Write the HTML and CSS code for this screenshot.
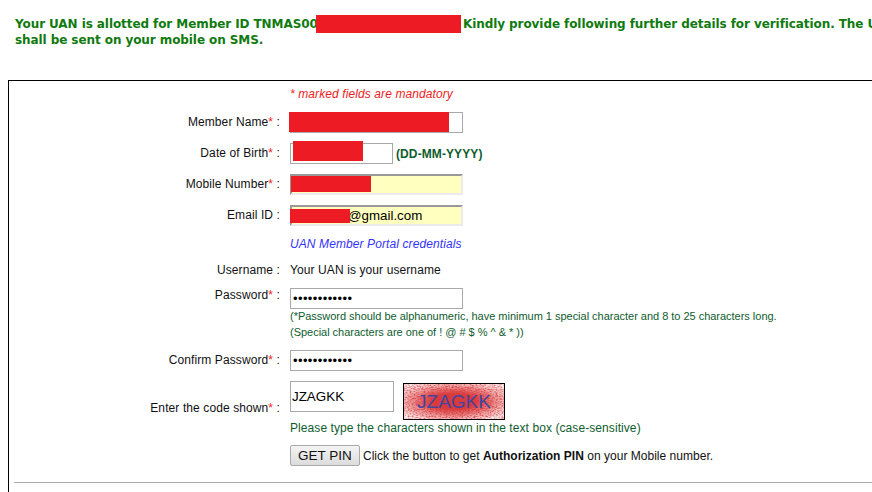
FILE: index.html
```html
<!DOCTYPE html>
<html lang="en">
<head>
    <meta charset="UTF-8">
    <title>UAN Member Registration</title>
    <link rel="stylesheet" href="styles.css">
</head>
<body>
    <div class="message">
        <span class="messageId">Your UAN is allotted for Member ID TNMAS00<span class="redact redactId"></span></span>Kindly provide following further details for verification. The UAN<br>
        shall be sent on your mobile on SMS.
    </div>
    <div class="formBox">
        <div class="row rowNote">
            <div></div>
            <div class="mandatory">* marked fields are mandatory</div>
        </div>
        <div class="row">
            <label>Member Name<span class="star">*</span> :</label>
            <div class="field">
                <input class="input" type="text">
                <span class="redact redactName"></span>
            </div>
        </div>
        <div class="row">
            <label>Date of Birth<span class="star">*</span> :</label>
            <div class="field">
                <input class="input inputDate" type="text">
                <span class="redact redactDate"></span>
                <b class="dateHint">(DD-MM-YYYY)</b>
            </div>
        </div>
        <div class="row">
            <label>Mobile Number<span class="star">*</span> :</label>
            <div class="field">
                <input class="input inputLocked" type="text">
                <span class="redact redactMobile"></span>
            </div>
        </div>
        <div class="row">
            <label>Email ID :</label>
            <div class="field">
                <input class="input inputLocked inputEmail" type="text" value="@gmail.com">
                <span class="redact redactEmail"></span>
            </div>
        </div>
        <div class="row rowPortal">
            <div></div>
            <div class="portal">UAN Member Portal credentials</div>
        </div>
        <div class="row rowUser">
            <label>Username :</label>
            <div>Your UAN is your username</div>
        </div>
        <div class="row rowPassword">
            <label>Password<span class="star">*</span> :</label>
            <div>
                <input class="input inputPass" type="password" value="abcdefgh1234">
                <div class="hint hintFirst">(*Password should be alphanumeric, have minimum 1 special character and 8 to 25 characters long.</div>
                <div class="hint">(Special characters are one of ! @ # $ % ^ &amp; * ))</div>
            </div>
        </div>
        <div class="row">
            <label>Confirm Password<span class="star">*</span> :</label>
            <div class="field">
                <input class="input inputPass" type="password" value="abcdefgh1234">
            </div>
        </div>
        <div class="row rowCode">
            <label>Enter the code shown<span class="star">*</span> :</label>
            <div class="codeBox">
                <input class="input inputCode" type="text" value="JZAGKK">
                <div class="captcha">
                    <svg class="captchaNoise" width="100" height="35">
                        <filter id="scratch">
                            <feTurbulence type="fractalNoise" baseFrequency="0.5 0.9" numOctaves="2" seed="4"/>
                            <feColorMatrix values="0 0 0 0 1  0 0 0 0 1  0 0 0 0 1  2.4 0 0 0 -0.5"/>
                        </filter>
                        <rect width="100" height="35" filter="url(#scratch)"/>
                    </svg>
                    <span class="captchaText">JZAGKK</span>
                </div>
            </div>
        </div>
        <div class="row rowType">
            <div></div>
            <div class="typeHint">Please type the characters shown in the text box (case-sensitive)</div>
        </div>
        <div class="row rowPin">
            <div></div>
            <div class="pinBox">
                <button class="pinButton">GET PIN</button>
                <span>Click the button to get <b>Authorization PIN</b> on your Mobile number.</span>
            </div>
        </div>
        <div class="divider"></div>
    </div>
</body>
</html>
```

FILE: styles.css
```css
html, body {
    margin: 0;
    height: 492px;
    overflow: hidden;
    background-color: white;
}
body {
    font-family: "Liberation Sans", Arial, sans-serif;
    font-size: 12px;
    letter-spacing: 0.1px;
    color: #111;
}
.message {
    width: 1000px;
    height: 80px;
    box-sizing: border-box;
    padding: 16px 0 0 15px;
    font-family: "DejaVu Sans", Verdana, sans-serif;
    font-size: 12px;
    font-weight: bold;
    letter-spacing: -0.08px;
    line-height: 16px;
    color: #0f7a0f;
    white-space: nowrap;
}
.messageId {
    display: inline-block;
    position: relative;
    width: 448px;
}
.formBox {
    width: 1000px;
    margin-left: 8px;
    border: 1px solid black;
    border-bottom: none;
    height: 420px;
}
.row {
    display: grid;
    grid-template-columns: 271px 1fr;
    column-gap: 10px;
    align-items: center;
    height: 31px;
}
.row label {
    text-align: right;
    padding-bottom: 2px;
}
.rowNote {
    height: 26px;
}
.rowPortal {
    height: 25px;
}
.rowUser {
    height: 27px;
}
.rowUser label {
    padding-bottom: 0;
}
.rowPassword {
    height: 62px;
    align-items: start;
    padding-top: 5px;
    box-sizing: border-box;
}
.rowPassword label {
    padding-bottom: 0;
}
.rowCode {
    height: 45px;
}
.rowCode label {
    padding: 19px 0 0;
}
.rowType {
    height: 13px;
}
.rowPin {
    height: 43px;
}
.field {
    position: relative;
    display: flex;
    align-items: center;
}
.star {
    color: #ed1c24;
}
.mandatory {
    font-style: italic;
    color: #ed1c24;
}
.portal {
    font-style: italic;
    color: #3333ff;
}
.input {
    display: block;
    box-sizing: border-box;
    width: 173px;
    height: 21px;
    margin: 0;
    padding: 1px 2px;
    border: 1px solid #a9a9a9;
    border-radius: 0;
    background-color: white;
    font-family: "Liberation Sans", Arial, sans-serif;
    font-size: 13px;
    color: black;
}
.inputDate {
    width: 103px;
}
.inputLocked {
    border-style: solid;
    border-width: 2px;
    border-color: #999 #ebebeb #ebebeb #999;
    background-color: #ffffc0;
    padding: 1px 0;
}
.inputEmail {
    padding-left: 56px;
    font-size: 13.33px;
}
.inputPass {
    letter-spacing: 0.4px;
}
.inputCode {
    width: 104px;
    height: 31px;
    padding: 0 1px;
    font-size: 13.4px;
}
.dateHint {
    margin-left: 3px;
    color: #0f5c2e;
}
.redact {
    position: absolute;
    background-color: #ed1c24;
}
.redactId {
    left: 301px;
    top: -1px;
    width: 145px;
    height: 18px;
}
.redactName {
    left: -1px;
    top: 0;
    width: 160px;
    height: 20px;
}
.redactDate {
    left: 3px;
    top: -2px;
    width: 70px;
    height: 20px;
}
.redactMobile {
    left: 1px;
    top: 2px;
    width: 80px;
    height: 16px;
}
.redactEmail {
    left: 0;
    top: 4px;
    width: 60px;
    height: 14px;
}
.hint {
    font-size: 11px;
    letter-spacing: -0.02px;
    line-height: 16px;
    color: #0f5c2e;
    white-space: nowrap;
}
.hintFirst {
    margin-top: -1px;
}
.codeBox {
    display: flex;
    align-items: flex-start;
    gap: 9px;
    height: 45px;
    padding-top: 5px;
    box-sizing: border-box;
}
.captcha {
    position: relative;
    box-sizing: border-box;
    width: 102px;
    height: 37px;
    margin-top: 2px;
    border: 1px solid black;
    background: radial-gradient(ellipse at center, #d93a3c 50%, #e67f80 100%);
    font-size: 19px;
    letter-spacing: 0;
    line-height: 35px;
    text-align: center;
    color: #4345a0;
}
.captchaNoise {
    position: absolute;
    left: 0;
    top: 0;
    opacity: 0.9;
    -webkit-mask-image: radial-gradient(ellipse at center, transparent 30%, black 90%);
    mask-image: radial-gradient(ellipse at center, transparent 30%, black 90%);
}
.captchaText {
    position: relative;
}
.typeHint {
    letter-spacing: 0.08px;
    color: #0f5c2e;
}
.pinBox {
    display: flex;
    align-items: center;
    gap: 3px;
    letter-spacing: 0.02px;
    white-space: nowrap;
}
.pinButton {
    box-sizing: border-box;
    width: 70px;
    height: 21px;
    padding: 0;
    border: 1px solid #a9a9a9;
    border-radius: 2px;
    background: linear-gradient(#f4f4f4, #dcdcdc);
    font-family: "Liberation Sans", Arial, sans-serif;
    font-size: 13.5px;
    color: #111;
}
.divider {
    margin: 5px 0 0 5px;
    border-top: 1px solid #a9a9a9;
}
```
